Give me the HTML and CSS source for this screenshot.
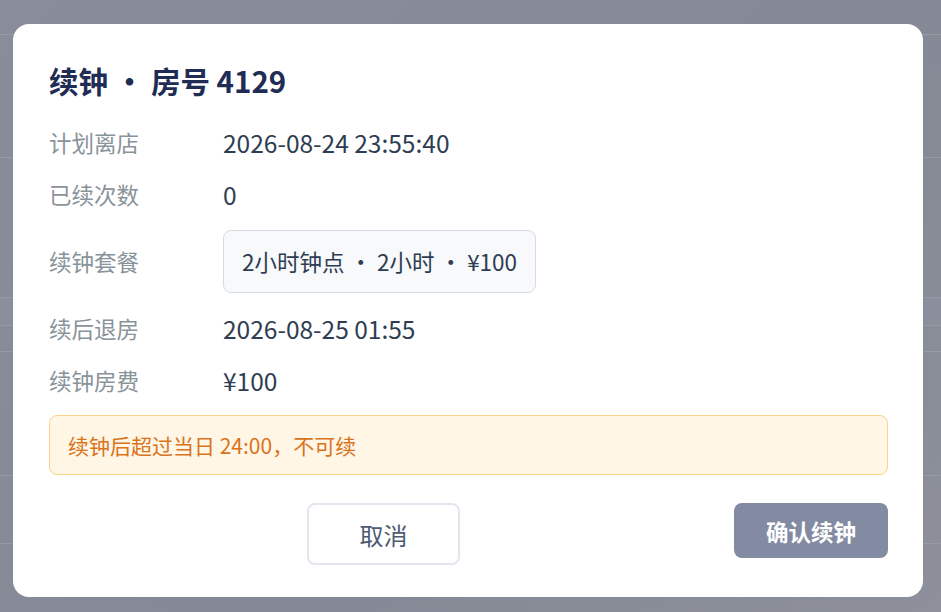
FILE: index.html
```html
<!DOCTYPE html>
<html lang="zh-CN">
<head>
    <meta charset="UTF-8">
    <meta name="viewport" content="width=device-width, initial-scale=1.0">
    <title>续钟</title>
    <link rel="stylesheet" href="styles.css">
</head>
<body>
    <div class="page">
        <div class="page-row" style="height: 35px"></div>
        <div class="page-row" style="height: 123px"></div>
        <div class="page-row" style="height: 140px"></div>
        <div class="page-row light" style="height: 28px"></div>
        <div class="page-row" style="height: 26px"></div>
        <div class="page-row" style="height: 124px"></div>
        <div class="page-row" style="height: 68px"></div>
    </div>

    <div class="modal">
        <h2 class="modal-title">续钟 · 房号 4129</h2>

        <div class="info">
            <div class="info-label">计划离店</div>
            <div class="info-value">2026-08-24 23:55:40</div>

            <div class="info-label">已续次数</div>
            <div class="info-value">0</div>

            <div class="info-label">续钟套餐</div>
            <div class="info-value">
                <div class="package">2小时钟点 · 2小时 · ¥100</div>
            </div>

            <div class="info-label">续后退房</div>
            <div class="info-value">2026-08-25 01:55</div>

            <div class="info-label">续钟房费</div>
            <div class="info-value">¥100</div>
        </div>

        <div class="alert">续钟后超过当日 24:00，不可续</div>

        <div class="modal-footer">
            <button class="btn btn-cancel">取消</button>
            <button class="btn btn-confirm" disabled>确认续钟</button>
        </div>
    </div>
</body>
</html>
```

FILE: styles.css
```css
body {
    margin: 0;
    padding: 0;
    font-family: "Noto Sans CJK SC", "Noto Sans", sans-serif;
    background-color: #868a96;
    overflow: hidden;
}

.page {
    height: 612px;
    background: linear-gradient(135deg, #898d99 0%, #858995 60%, #8d909a 100%);
}

.page-row {
    border-bottom: 1px solid #959aa5;
    box-sizing: border-box;
}

.page-row.light {
    background-color: #8b8f9b;
}

/* dialog on top of the dimmed page */
.modal {
    position: absolute;
    top: 24px;
    left: 13px;
    width: 910px;
    height: 573px;
    box-sizing: border-box;
    padding: 36px 35px 32px 36px;
    background-color: #fff;
    border-radius: 16px;
}

.modal-title {
    margin: 0 0 26px;
    font-size: 29.5px;
    line-height: 40px;
    font-weight: 700;
    color: #1f2d55;
}

.info {
    display: grid;
    grid-template-columns: 174px 1fr;
    row-gap: 19px;
    align-items: center;
    line-height: 33px;
}

.info-label {
    color: #89939a;
    font-size: 22.5px;
}

.info-value {
    color: #2f3d52;
    font-size: 24.5px;
}

.package {
    display: inline-block;
    padding: 14px 18px 15px;
    background-color: #f7f9fb;
    border: 1px solid #d5dbe3;
    border-radius: 8px;
    font-size: 22.5px;
    line-height: 32px;
}

.alert {
    margin-top: 18px;
    padding: 14px 18px;
    background-color: #fff6e5;
    border: 1px solid #fbd38a;
    border-radius: 8px;
    color: #d9731c;
    font-size: 21px;
    line-height: 30px;
}

.modal-footer {
    display: flex;
    justify-content: flex-end;
    align-items: flex-start;
    gap: 274px;
    margin-top: 28px;
}

.btn {
    font-family: inherit;
    border-radius: 8px;
    cursor: pointer;
}

.btn-cancel {
    width: 153px;
    height: 62px;
    background-color: #fff;
    border: 2px solid #e3e6ee;
    color: #4d5c72;
    font-size: 24px;
}

.btn-confirm {
    width: 154px;
    height: 55px;
    background-color: #828ba2;
    border: none;
    color: #fff;
    font-size: 22.5px;
    font-weight: 700;
}
```
